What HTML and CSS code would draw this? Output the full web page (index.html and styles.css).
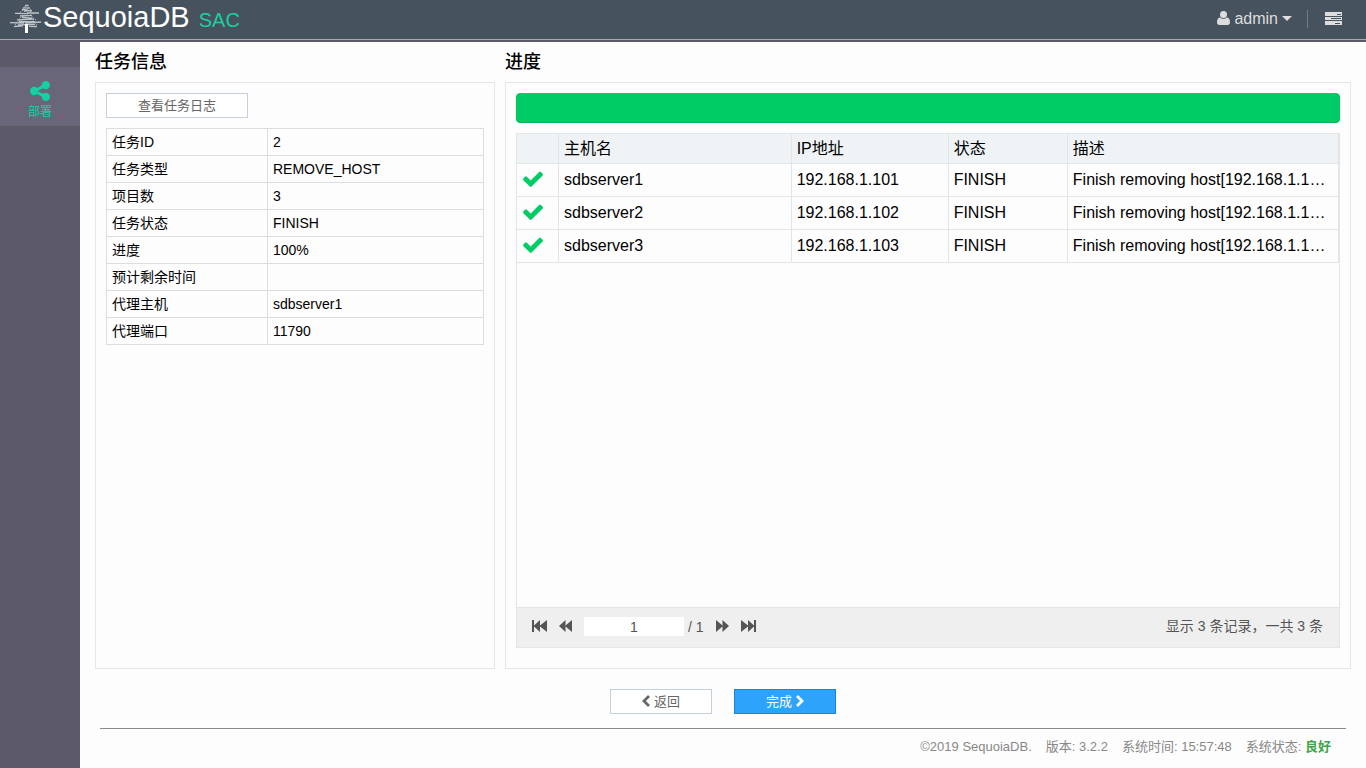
FILE: index.html
```html
<!DOCTYPE html>
<html lang="zh-CN">
<head>
<meta charset="utf-8">
<title>SequoiaDB SAC</title>
<link rel="stylesheet" href="styles.css">
</head>
<body>
<header class="topbar">
  <div class="brand">
    <svg class="brand-tree" width="32" height="30" viewBox="0 0 32 30" fill="none" stroke="#bcc3c8" stroke-width="1.3" aria-hidden="true">
      <path d="M15 1.500h3.500M13 3.800l7 .4M12 5.500l6 .6M14 7l8-.4M5 9.300l13 .3M17 9h12M10 12l12-.6M12 13.500l10 .6M7 15.800l17-.6M9 17.500l16 .3M0 18.600l14 .4M15 19l16-1M8 20.800l17-.4M4 22.500l9-.6M19 22.300l8 .2"/>
      <path d="M15.500 2l-3 3.500M18 2.500l3 3.500M13 6l-4 3.500M20 7l4 3M13 11l-5 5M20 11l6 5M10 15l-5 6M22 15l5 6" stroke-width="0.8" stroke-dasharray="2 1"/>
      <path stroke="#fff" stroke-width="3" d="M16.500 20v9"/>
    </svg>
    <span class="brand-name">SequoiaDB</span>
    <span class="brand-suffix">SAC</span>
  </div>
  <div class="tools">
    <button class="tool" type="button">
      <svg width="13" height="14" viewBox="0 0 13 14" fill="currentColor" aria-hidden="true"><circle cx="6.500" cy="3.500" r="3.500"/><path d="M3 6.200C1 6.800 0 8.500 0 11.500 0 13 1 14 2.500 14h8c1.500 0 2.500-1 2.500-2.500 0-3-1-4.700-3-5.300C9 7.300 7.800 7.800 6.500 7.800S4 7.300 3 6.200z"/></svg>
      <span>admin</span>
      <svg width="10" height="5" viewBox="0 0 10 5" fill="currentColor" aria-hidden="true"><path d="M0 0h10L5 5z"/></svg>
    </button>
    <button class="tool tool-tasks" type="button" aria-label="任务列表">
      <svg width="17" height="13" viewBox="0 0 17 13" fill="currentColor" aria-hidden="true"><path fill-rule="evenodd" d="M0 0h17v4H0zM12 2v1h4V2zM0 5h17v3H0zM6 6v1h10V6zM0 9h17v4H0zM10 11v1h5v-1z"/></svg>
    </button>
  </div>
</header>
<div class="shell">
  <nav class="sidebar">
    <a class="nav-item" href="#">
      <svg width="20" height="20" viewBox="0 128 1536 1536" fill="currentColor" aria-hidden="true"><path d="M1216 1024q133 0 226.500 93.500t93.500 226.500-93.500 226.500-226.500 93.500-226.500-93.500-93.500-226.500q0-12 2-34l-360-180q-92 86-218 86-133 0-226.500-93.500t-93.500-226.500 93.500-226.500 226.500-93.500q126 0 218 86l360-180q-2-22-2-34 0-133 93.500-226.500t226.500-93.500 226.500 93.500 93.500 226.500-93.500 226.500-226.500 93.500q-126 0-218-86l-360 180q2 22 2 34t-2 34l360 180q92-86 218-86z"/></svg>
      <span>部署</span>
    </a>
  </nav>
  <main class="main">
    <div class="columns">
      <section class="column column-info">
        <h2 class="title">任务信息</h2>
        <div class="panel">
          <button class="btn btn-log" type="button">查看任务日志</button>
          <table class="info">
            <tr><th scope="row">任务ID</th><td>2</td></tr>
            <tr><th scope="row">任务类型</th><td>REMOVE_HOST</td></tr>
            <tr><th scope="row">项目数</th><td>3</td></tr>
            <tr><th scope="row">任务状态</th><td>FINISH</td></tr>
            <tr><th scope="row">进度</th><td>100%</td></tr>
            <tr><th scope="row">预计剩余时间</th><td></td></tr>
            <tr><th scope="row">代理主机</th><td>sdbserver1</td></tr>
            <tr><th scope="row">代理端口</th><td>11790</td></tr>
          </table>
        </div>
      </section>
      <section class="column column-progress">
        <h2 class="title">进度</h2>
        <div class="panel panel-progress">
          <div class="progress" role="progressbar" aria-label="进度" aria-valuenow="100" aria-valuemin="0" aria-valuemax="100"><div class="progress-fill" style="width:100%"></div></div>
          <div class="grid">
            <div class="grid-body">
              <table class="hosts">
                <colgroup><col class="c-icon"><col class="c-host"><col class="c-ip"><col class="c-state"><col></colgroup>
                <thead><tr><th></th><th>主机名</th><th>IP地址</th><th>状态</th><th>描述</th></tr></thead>
                <tbody>
                  <tr><td><svg class="check" viewBox="121 294 1550 1228" aria-hidden="true"><path d="M1671 566q0 40-28 68l-724 724-136 136q-28 28-68 28t-68-28l-136-136-362-362q-28-28-28-68t28-68l136-136q28-28 68-28t68 28l294 295 656-657q28-28 68-28t68 28l136 136q28 28 28 68z"/></svg></td><td>sdbserver1</td><td>192.168.1.101</td><td>FINISH</td><td>Finish removing host[192.168.1.101].</td></tr>
                  <tr><td><svg class="check" viewBox="121 294 1550 1228" aria-hidden="true"><path d="M1671 566q0 40-28 68l-724 724-136 136q-28 28-68 28t-68-28l-136-136-362-362q-28-28-28-68t28-68l136-136q28-28 68-28t68 28l294 295 656-657q28-28 68-28t68 28l136 136q28 28 28 68z"/></svg></td><td>sdbserver2</td><td>192.168.1.102</td><td>FINISH</td><td>Finish removing host[192.168.1.102].</td></tr>
                  <tr><td><svg class="check" viewBox="121 294 1550 1228" aria-hidden="true"><path d="M1671 566q0 40-28 68l-724 724-136 136q-28 28-68 28t-68-28l-136-136-362-362q-28-28-28-68t28-68l136-136q28-28 68-28t68 28l294 295 656-657q28-28 68-28t68 28l136 136q28 28 28 68z"/></svg></td><td>sdbserver3</td><td>192.168.1.103</td><td>FINISH</td><td>Finish removing host[192.168.1.103].</td></tr>
                </tbody>
              </table>
            </div>
            <div class="pager">
              <div class="pager-nav">
                <button class="page-btn" type="button" aria-label="首页"><svg width="15" height="12" viewBox="0 0 15 12" fill="currentColor"><path d="M0 0h2v5.500L8 0v5.500L15 0v12L8 6.500V12L2 6.500V12H0z"/></svg></button>
                <button class="page-btn" type="button" aria-label="上一页"><svg width="13" height="12" viewBox="0 0 13 12" fill="currentColor"><path d="M0 6l6.500-6v5.500L13 0v12L6.500 6.500V12z"/></svg></button>
                <div class="page-pos"><input class="page-input" type="text" value="1" aria-label="页码"><span>/ 1</span></div>
                <button class="page-btn" type="button" aria-label="下一页"><svg width="13" height="12" viewBox="0 0 13 12" fill="currentColor"><path d="M13 6L6.500 0v5.500L0 0v12l6.500-5.500V12z"/></svg></button>
                <button class="page-btn" type="button" aria-label="末页"><svg width="15" height="12" viewBox="0 0 15 12" fill="currentColor"><path d="M15 0h-2v5.500L7 0v5.500L0 0v12l7-5.500V12l6-5.500V12h2z"/></svg></button>
              </div>
              <span class="pager-total">显示 3 条记录，一共 3 条</span>
            </div>
          </div>
        </div>
      </section>
    </div>
    <div class="actions">
      <button class="btn btn-step" type="button"><svg width="8" height="12" viewBox="0 0 8 12" fill="none" stroke="currentColor" stroke-width="2.800" aria-hidden="true"><path d="M7 1L2 6l5 5"/></svg><span>返回</span></button>
      <button class="btn btn-step btn-primary" type="button"><span>完成</span><svg width="8" height="12" viewBox="0 0 8 12" fill="none" stroke="currentColor" stroke-width="2.800" aria-hidden="true"><path d="M1 1l5 5-5 5"/></svg></button>
    </div>
    <footer class="footer">
      <span>©2019 SequoiaDB.</span>
      <span>版本: 3.2.2</span>
      <span>系统时间: 15:57:48</span>
      <span>系统状态: <strong class="ok">良好</strong></span>
    </footer>
  </main>
</div>
</body>
</html>
```
FILE: styles.css
```css
* { box-sizing: border-box; }

body {
  margin: 0;
  min-height: 100vh;
  display: flex;
  flex-direction: column;
  background: #fdfdfd;
  color: #000;
  font-family: "Liberation Sans", "Noto Sans CJK SC", sans-serif;
  font-size: 14px;
}

button, input { font: inherit; color: inherit; }
svg { display: block; flex: none; }

.topbar {
  display: flex;
  justify-content: space-between;
  height: 42px;
  padding: 0 24px 0 10px;
  background: linear-gradient(#46525e 39px, #a9a9b1 39px, #a9a9b1 40px, #5c5969 40px);
}

.brand { display: flex; align-items: baseline; color: #fff; line-height: 34px; }
.brand-tree { align-self: flex-start; margin: 4px 1px 0 0; }
.brand-name { font-size: 29px; }
.brand-suffix { margin-left: 9px; font-size: 20px; color: #1bcf9f; }

.tools { display: flex; align-items: center; height: 38px; color: #ddd; font-size: 16px; }
.tool {
  display: flex;
  align-items: center;
  gap: 4px;
  height: 18px;
  padding: 0;
  border: 0;
  background: none;
}
.tool svg { margin-bottom: 2px; }
.tool-tasks { margin-left: 15px; padding-left: 17px; border-left: 1px solid #737c85; }

.shell { flex: 1; display: flex; }
.sidebar { flex: none; width: 80px; padding-top: 25px; background: #5c5969; }
.nav-item {
  display: flex;
  flex-direction: column;
  align-items: center;
  gap: 2px;
  height: 59px;
  padding-top: 14px;
  background: #686678;
  color: #13d1a3;
  font-size: 12px;
  line-height: 18px;
  text-decoration: none;
}

.main { flex: 1; min-width: 0; display: flex; flex-direction: column; }
.columns { flex: 1; display: flex; gap: 10px; padding: 0 15px; }
.column { display: flex; flex-direction: column; }
.column-info { flex: none; width: 400px; }
.column-progress { flex: 1; min-width: 0; }

.title { margin: 0; font-size: 18px; font-weight: 500; line-height: 40px; }
.panel { flex: 1; padding: 10px; border: 1px solid #e3e7e8; }

.btn {
  display: flex;
  align-items: center;
  justify-content: center;
  gap: 4px;
  height: 25px;
  padding: 0 0 2px;
  border: 1px solid #c6d0dc;
  background: #fff;
  color: #666;
  font-size: 13px;
}
.btn-log { width: 142px; }
.btn-step { width: 102px; }
.btn-primary { border-color: #1c84d6; background: #2ea3fc; color: #fff; }

.info { width: 378px; margin-top: 10px; border-collapse: collapse; table-layout: fixed; }
.info th, .info td {
  height: 27px;
  padding: 0 5px;
  border: 1px solid #dcdddd;
  font-weight: 400;
  line-height: 26px;
  text-align: left;
}
.info th { width: 161px; }

.panel-progress { display: flex; flex-direction: column; gap: 10px; padding-bottom: 20px; }
.progress { height: 30px; border-radius: 4px; overflow: hidden; }
.progress-fill { height: 100%; border-bottom: 1px solid #00b35a; border-radius: 4px; background: #00cc66; }

.grid { flex: 1; display: flex; flex-direction: column; border: 1px solid #e2e6e6; }
.grid-body { flex: 1; }
.hosts { width: 100%; border-collapse: separate; border-spacing: 0; table-layout: fixed; font-size: 16px; }
.hosts th, .hosts td {
  height: 33px;
  padding: 0 5px;
  border-right: 1px solid #e2e6e6;
  border-bottom: 1px solid #e2e6e6;
  font-weight: 400;
  line-height: 32px;
  text-align: left;
  white-space: nowrap;
  overflow: hidden;
  text-overflow: ellipsis;
}
.hosts th { height: 30px; background: #eff3f5; line-height: 28px; }
.c-icon { width: 42px; }
.c-host { width: 28.3%; }
.c-ip { width: 19.1%; }
.c-state { width: 14.5%; }
.check { width: 20px; height: 16px; margin: 0 0 2px 1px; fill: #0c6; }

.pager {
  display: flex;
  align-items: center;
  justify-content: space-between;
  height: 40px;
  padding: 0 16px 2px 15px;
  border-top: 1px solid #e2e6e6;
  background: #efefef;
  color: #555;
}
.pager-nav { display: flex; align-items: center; gap: 12px; }
.page-btn { padding: 0 0 2px; border: 0; background: none; }
.page-pos { display: flex; align-items: center; gap: 4px; }
.page-input { width: 100px; height: 19px; padding: 0; border: 0; background: #fff; text-align: center; }
.pager-total { padding-bottom: 3px; }

.actions { display: flex; justify-content: center; gap: 22px; padding: 20px 0 14px; }

.footer {
  display: flex;
  justify-content: flex-end;
  gap: 14px;
  height: 40px;
  margin: 0 20px;
  padding-right: 15px;
  border-top: 1px solid #8a8a8a;
  color: #888;
  font-size: 13px;
  line-height: 36px;
}
.ok { color: #3fa648; }
```
